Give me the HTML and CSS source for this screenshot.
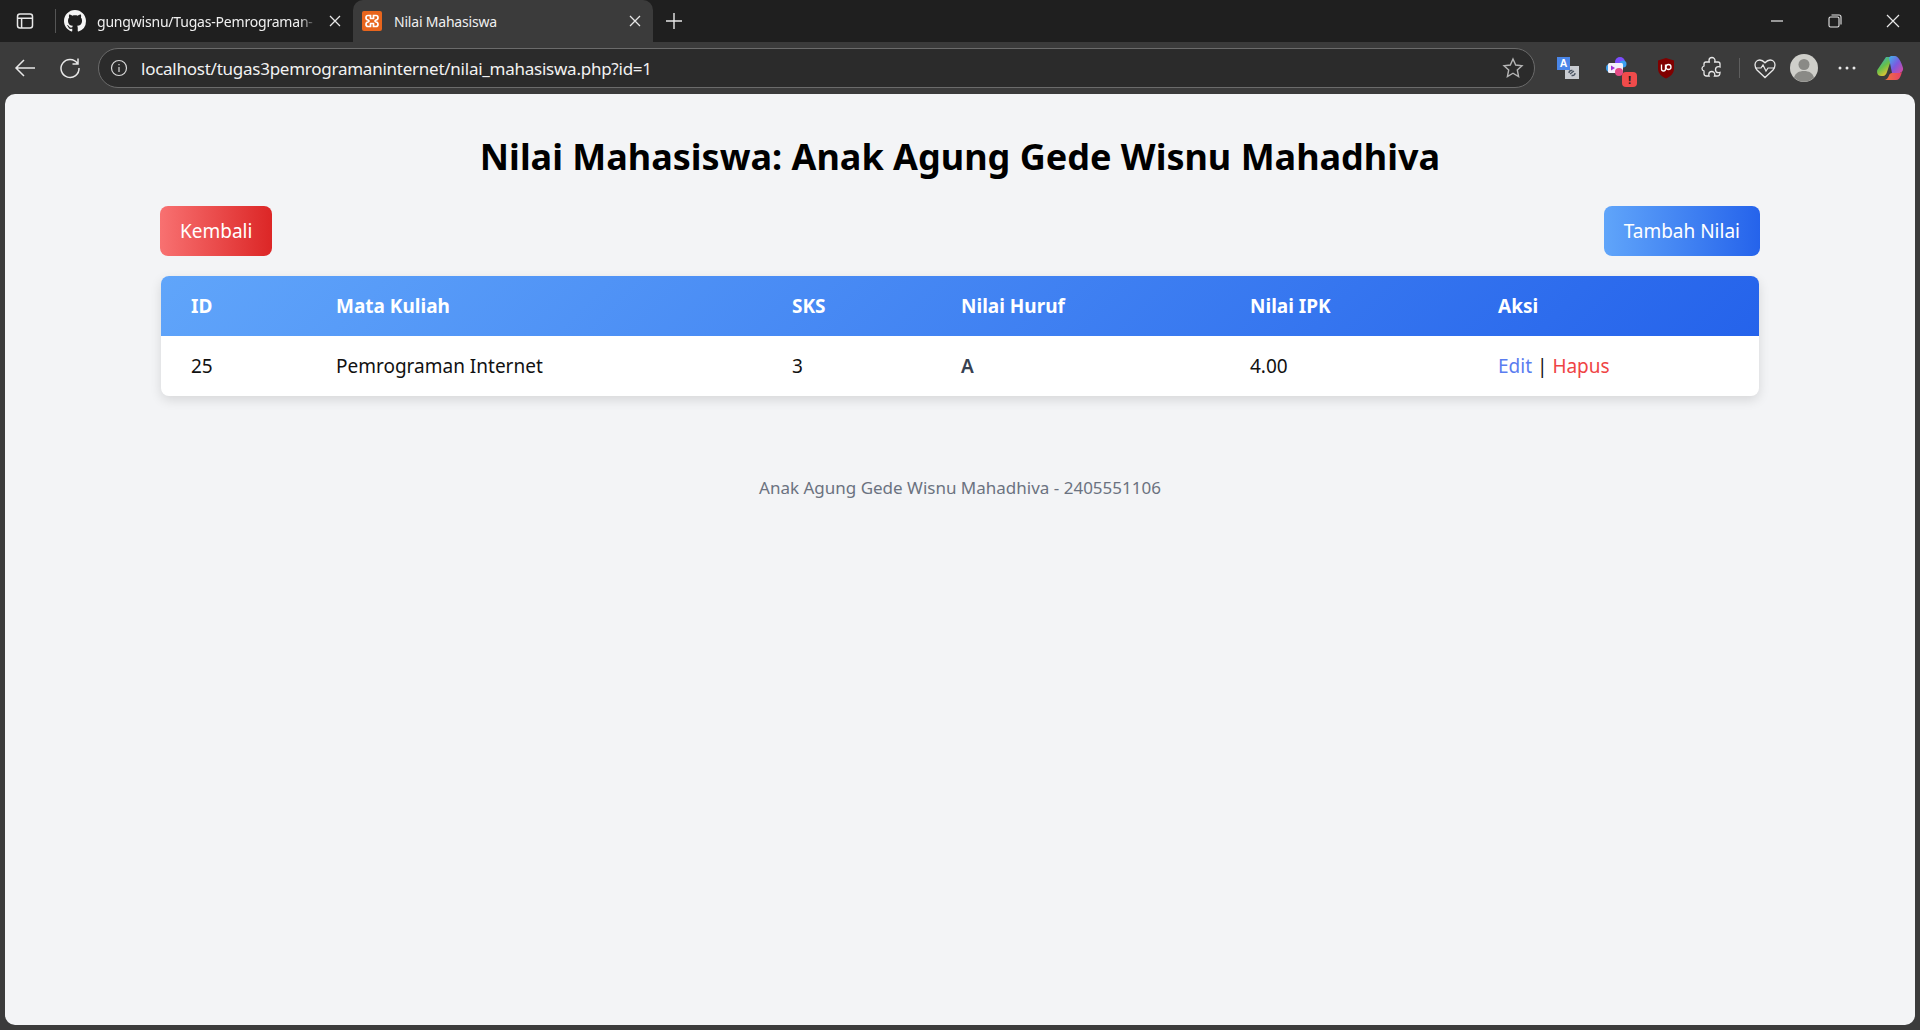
FILE: index.html
```html
<!DOCTYPE html>
<html lang="en">
<head>
    <meta charset="UTF-8">
    <meta name="viewport" content="width=device-width, initial-scale=1.0">
    <title>Nilai Mahasiswa</title>
    <link rel="stylesheet" href="styles.css">
</head>
<body>
    <!-- browser chrome -->
    <div class="tab-strip">
        <svg class="tab-panel-icon" width="20" height="20" viewBox="0 0 20 20" fill="none" stroke="#e8e8e8" stroke-width="1.5"><rect x="2.5" y="3" width="15" height="14" rx="2.5"/><path d="M2.5 7.2h15M6.6 7.2V17"/></svg>
        <div class="tab-sep"></div>
        <div class="tab">
            <svg class="tab-favicon" width="22" height="22" viewBox="0 0 16 16" fill="#f5f5f5"><path d="M8 0C3.58 0 0 3.58 0 8c0 3.54 2.29 6.53 5.47 7.59.4.07.55-.17.55-.38 0-.19-.01-.82-.01-1.49-2.01.37-2.53-.49-2.69-.94-.09-.23-.48-.94-.82-1.13-.28-.15-.68-.52-.01-.53.63-.01 1.08.58 1.23.82.72 1.21 1.87.87 2.33.66.07-.52.28-.87.51-1.07-1.78-.2-3.64-.89-3.64-3.95 0-.87.31-1.59.82-2.15-.08-.2-.36-1.02.08-2.12 0 0 .67-.21 2.2.82.64-.18 1.32-.27 2-.27s1.36.09 2 .27c1.53-1.04 2.2-.82 2.2-.82.44 1.1.16 1.92.08 2.12.51.56.82 1.27.82 2.15 0 3.07-1.87 3.75-3.65 3.95.29.25.54.73.54 1.48 0 1.07-.01 1.93-.01 2.2 0 .21.15.46.55.38A8.01 8.01 0 0 0 16 8c0-4.42-3.58-8-8-8z"/></svg>
            <span class="tab-title tab-title-cut">gungwisnu/Tugas-Pemrograman-</span>
            <svg class="tab-close" width="12" height="12" viewBox="0 0 12 12" stroke="#e8e8e8" stroke-width="1.3"><path d="M1 1l10 10M11 1L1 11"/></svg>
        </div>
        <div class="tab tab-active">
            <svg class="tab-favicon" width="20" height="20" viewBox="0 0 20 20"><rect width="20" height="20" rx="2" fill="#e8651d"/><path d="M6 4.5h2.5v3H11.500v-3H14c1.500 0 2 1.200 2 2.300s-.8 2-2 2.200l-1 1 1 1c1.200.2 2 1.100 2 2.200s-.5 2.300-2 2.300h-2.500v-3H8.500v3H6c-1.500 0-2-1.200-2-2.300s.8-2 2-2.200l1-1-1-1c-1.200-.2-2-1.100-2-2.200s.5-2.300 2-2.300z" fill="none" stroke="#fff" stroke-width="1.700"/></svg>
            <span class="tab-title">Nilai Mahasiswa</span>
            <svg class="tab-close" width="12" height="12" viewBox="0 0 12 12" stroke="#e8e8e8" stroke-width="1.3"><path d="M1 1l10 10M11 1L1 11"/></svg>
        </div>
        <svg class="tab-new" width="18" height="18" viewBox="0 0 18 18" stroke="#e8e8e8" stroke-width="1.4"><path d="M9 1v16M1 9h16"/></svg>
        <div class="window-controls">
            <svg width="14" height="14" viewBox="0 0 14 14" stroke="#e8e8e8" stroke-width="1.2"><path d="M1 7h12"/></svg>
            <svg width="14" height="14" viewBox="0 0 14 14" fill="none" stroke="#e8e8e8" stroke-width="1.100"><rect x="1" y="3" width="10" height="10" rx="1.500"/><path d="M3.500 1h7.500a2 2 0 0 1 2 2v7.500"/></svg>
            <svg width="14" height="14" viewBox="0 0 14 14" stroke="#e8e8e8" stroke-width="1.200"><path d="M1 1l12 12M13 1L1 13"/></svg>
        </div>
    </div>

    <div class="toolbar">
        <svg class="tool-icon" width="24" height="24" viewBox="0 0 24 24" fill="none" stroke="#e8e8e8" stroke-width="1.500"><path d="M22 12H3M11 4l-8 8 8 8"/></svg>
        <svg class="tool-icon" width="24" height="24" viewBox="0 0 24 24" fill="none" stroke="#e8e8e8" stroke-width="1.500"><path d="M19.500 7.500A9 9 0 1 0 21 12M20 2.500v5.500h-5.500"/></svg>
        <div class="address-bar">
            <svg width="18" height="18" viewBox="0 0 18 18" fill="none" stroke="#d8d8d8" stroke-width="1.200"><circle cx="9" cy="9" r="7.500"/><path d="M9 8v5M9 5v1.300"/></svg>
            <span class="url">localhost/tugas3pemrogramaninternet/nilai_mahasiswa.php?id=1</span>
            <svg class="star" width="22" height="22" viewBox="0 0 22 22" fill="none" stroke="#b5b5b5" stroke-width="1.400"><path d="M11 2l2.700 6 6.300.7-4.700 4.300 1.300 6.500L11 16.200l-5.600 3.300 1.300-6.500L2 8.700 8.300 8z"/></svg>
        </div>
        <div class="extensions">
            <svg class="ext ext-translate" width="24" height="24" viewBox="0 0 24 24"><rect x="9" y="10" width="14" height="13" fill="#c9ccd1"/><path d="M13 17a2.500 2.500 0 0 1 2.500-2.500h1M19 17a2.500 2.500 0 0 1-2.500 2.500h-1M14 18l4-3" stroke="#4b5563" stroke-width="1.300" fill="none"/><rect x="1" y="1" width="13" height="13" fill="#4a86e8"/><text x="7.500" y="11" font-size="10.500" font-weight="700" fill="#fff" text-anchor="middle" font-family="Liberation Sans, sans-serif">A</text></svg>
            <div class="ext ext-badged">
                <svg width="24" height="24" viewBox="0 0 24 24"><circle cx="15" cy="6" r="5" fill="#7c4dff"/><circle cx="18" cy="8" r="3.500" fill="#3aa0f0"/><circle cx="5" cy="12" r="4" fill="#3aa0f0"/><rect x="3" y="7" width="15" height="10" rx="1.500" fill="#f3f0fb"/><path d="M6 9.500l4 2.500-4 2.500z" fill="#a232d8"/><circle cx="14" cy="16" r="4" fill="#e44a86"/></svg>
                <span class="ext-alert">!</span>
            </div>
            <svg class="ext" width="20" height="24" viewBox="0 0 20 24"><path d="M10 2l8 2.500v8c0 5-3.500 8-8 10-4.500-2-8-5-8-10v-8z" fill="#800000"/><path d="M5.500 8.500v4.500a2 2 0 0 0 4 0V8.500" fill="none" stroke="#fff" stroke-width="1.300"/><circle cx="12.500" cy="11" r="2.500" fill="none" stroke="#fff" stroke-width="1.300"/></svg>
            <svg class="ext" width="22" height="24" viewBox="0 0 22 24" fill="none" stroke="#e8e8e8" stroke-width="1.300"><path d="M8 4.500a3 3 0 0 1 6 0c0 .6-.2 1-.3 1.500H17a2 2 0 0 1 2 2v3c-.5-.2-1-.3-1.500-.3a3 3 0 0 0 0 6c.5 0 1-.1 1.500-.3 0 2-1 3.600-3 3.600h-2.500c.2-.4.300-.9.300-1.500a3 3 0 0 0-6 0c0 .6.100 1.100.3 1.500H5.500c-1.500 0-2.500-1-2.500-2.500v-2.500c-1-.3-2-1.200-2-2.500s1-2.200 2-2.500V8a2 2 0 0 1 2-2h3.300C8.200 5.500 8 5.100 8 4.500z"/></svg>
            <div class="tool-sep"></div>
            <svg class="ext" width="22" height="22" viewBox="0 0 22 22" fill="none" stroke="#e8e8e8" stroke-width="1.300"><path d="M3 13C1.500 11 1 9.500 1 8c0-3 2.200-5 4.800-5 2 0 3.600 1 5.200 2.800C12.600 4 14.200 3 16.200 3 18.800 3 21 5 21 8c0 1.500-.5 3-2 5l-8 7.500z"/><path d="M1.500 11H7l2-3 3 6 2-3h6.500" stroke-width="1.200"/></svg>
            <div class="avatar">
                <svg width="28" height="28" viewBox="0 0 28 28"><circle cx="14" cy="14" r="14" fill="#cfcfca"/><circle cx="14" cy="10.500" r="5.500" fill="#8a8a86"/><path d="M4 23.500c1.500-4.500 5-6.500 10-6.500s8.500 2 10 6.500a14 14 0 0 1-20 0z" fill="#8a8a86"/></svg>
            </div>
            <svg class="ext ext-more" width="18" height="4" viewBox="0 0 18 4" fill="#e8e8e8"><circle cx="2" cy="2" r="1.500"/><circle cx="9" cy="2" r="1.500"/><circle cx="16" cy="2" r="1.500"/></svg>
            <svg class="ext ext-copilot" width="28" height="26" viewBox="0 0 28 26" fill="none">
                <defs>
                    <linearGradient id="copilotA" x1="0" y1="0" x2="0.600" y2="1"><stop offset="0" stop-color="#29a8e8"/><stop offset="0.550" stop-color="#66c04a"/><stop offset="1" stop-color="#f2c230"/></linearGradient>
                    <linearGradient id="copilotB" x1="0" y1="0" x2="1" y2="1"><stop offset="0" stop-color="#3fb5e8"/><stop offset="0.500" stop-color="#7a5ae0"/><stop offset="1" stop-color="#e0489a"/></linearGradient>
                    <linearGradient id="copilotC" x1="0" y1="0" x2="1" y2="0"><stop offset="0" stop-color="#ef7a3a"/><stop offset="1" stop-color="#e83e6a"/></linearGradient>
                </defs>
                <path d="M10 2h6l-5 15c-.6 2-2 4-4 4H5c-3 0-4.500-3-3.700-6z" fill="url(#copilotA)"/>
                <path d="M13 3c.6-1.500 1.500-2 3-2h3c3 0 6 5 8 12 .5 2.500-1.500 5-4 5h-7z" fill="url(#copilotB)"/>
                <path d="M8 25h12c2.500 0 4-2 5-5l1-3c-1 1-3 1-5 1h-5c-1.500 0-2.500 1-3 2.500C12 23 10.500 25 8 25z" fill="url(#copilotC)"/>
            </svg>
        </div>
    </div>

    <!-- page -->
    <div class="viewport">
        <main class="content">
            <h1>Nilai Mahasiswa: Anak Agung Gede Wisnu Mahadhiva</h1>
            <div class="actions">
                <a class="btn btn-red" href="#">Kembali</a>
                <a class="btn btn-blue" href="#">Tambah Nilai</a>
            </div>
            <div class="table-wrap">
                <table>
                    <thead>
                        <tr>
                            <th class="col-id">ID</th>
                            <th class="col-mk">Mata Kuliah</th>
                            <th class="col-sks">SKS</th>
                            <th class="col-huruf">Nilai Huruf</th>
                            <th class="col-ipk">Nilai IPK</th>
                            <th>Aksi</th>
                        </tr>
                    </thead>
                    <tbody>
                        <tr>
                            <td>25</td>
                            <td>Pemrograman Internet</td>
                            <td>3</td>
                            <td class="grade">A</td>
                            <td>4.00</td>
                            <td><a class="link-edit" href="#">Edit</a> | <a class="link-hapus" href="#">Hapus</a></td>
                        </tr>
                    </tbody>
                </table>
            </div>
            <footer>Anak Agung Gede Wisnu Mahadhiva - 2405551106</footer>
        </main>
    </div>
</body>
</html>
```
FILE: styles.css
```css
* {
    box-sizing: border-box;
}

html, body {
    height: 100%;
}

body {
    margin: 0;
    display: flex;
    flex-direction: column;
    height: 1030px;
    overflow: hidden;
    background: #3b3b3b;
    font-family: "Noto Sans", "Open Sans", sans-serif;
}

/* browser chrome */
.tab-strip {
    height: 42px;
    flex: none;
    display: flex;
    align-items: center;
    background: #1f1f1f;
    color: #f0f0f0;
    font-size: 14px;
}

.tab-panel-icon {
    margin-left: 15px;
    flex: none;
}

.tab-sep {
    width: 1px;
    height: 24px;
    margin-left: 20px;
    background: #555;
}

.tab {
    display: flex;
    align-items: center;
    height: 42px;
    width: 297px;
    padding: 0 12px 0 8px;
}

.tab-active {
    width: 300px;
    padding-left: 9px;
    background: #3b3b3b;
    border-radius: 10px 10px 0 0;
}

.tab-favicon {
    flex: none;
}

.tab-title {
    flex: 1;
    margin-left: 11px;
    white-space: nowrap;
    overflow: hidden;
    letter-spacing: -0.2px;
}

.tab-active .tab-title {
    margin-left: 12px;
}

.tab-title-cut {
    -webkit-mask-image: linear-gradient(90deg, #000 92%, transparent);
    mask-image: linear-gradient(90deg, #000 92%, transparent);
}

.tab-close {
    flex: none;
    margin-left: 12px;
}

.tab-new {
    margin-left: 12px;
}

.window-controls {
    margin-left: auto;
    display: flex;
    gap: 44px;
    padding-right: 20px;
}

.toolbar {
    height: 52px;
    flex: none;
    display: flex;
    align-items: center;
    padding: 0 10px 0 13px;
    background: #3b3b3b;
}

.tool-icon {
    flex: none;
    margin-right: 21px;
}

.address-bar {
    flex: none;
    width: 1437px;
    height: 40px;
    margin-left: -5px;
    display: flex;
    align-items: center;
    padding: 0 10px 0 11px;
    background: #2b2b2b;
    border: 1px solid #6b6b6b;
    border-radius: 20px;
}

.url {
    flex: 1;
    margin-left: 13px;
    color: #f2f2f2;
    font-size: 17px;
    letter-spacing: -0.25px;
    white-space: nowrap;
}

.extensions {
    flex: 1;
    display: flex;
    align-items: center;
    padding-left: 21px;
}

.ext {
    flex: none;
}

.ext-badged {
    position: relative;
    width: 24px;
    height: 24px;
    margin-left: 25px;
}

.ext-alert {
    position: absolute;
    right: -8px;
    bottom: -7px;
    width: 15px;
    height: 15px;
    border-radius: 4px;
    background: #f04b4b;
    color: #1f1f1f;
    font-size: 11px;
    font-weight: 700;
    line-height: 15px;
    text-align: center;
}

.ext-badged + .ext {
    margin-left: 27px;
}

.ext-badged + .ext + .ext {
    margin-left: 25px;
}

.tool-sep {
    width: 1px;
    height: 20px;
    margin: 0 14px 0 16px;
    background: #5e5e5e;
}

.avatar {
    width: 28px;
    height: 28px;
    margin-left: 14px;
}

.ext-more {
    margin-left: 20px;
}

.ext-copilot {
    margin-left: 20px;
}

/* page */
.viewport {
    flex: 1;
    margin: 0 5px 5px;
    background: #f3f4f6;
    border-radius: 10px;
    overflow: hidden;
}

.content {
    width: 1600px;
    margin: 0 auto;
    padding-top: 38px;
}

h1 {
    margin: 0 0 24px;
    font-size: 36px;
    line-height: 50px;
    font-weight: 700;
    color: #000;
    text-align: center;
}

.actions {
    display: flex;
    justify-content: space-between;
    margin-bottom: 20px;
}

.btn {
    display: block;
    height: 50px;
    padding: 0 20px;
    border-radius: 8px;
    color: #fff;
    font-size: 19px;
    line-height: 50px;
    text-decoration: none;
}

.btn-red {
    background: linear-gradient(90deg, #f87171, #dc2626);
}

.btn-blue {
    background: linear-gradient(90deg, #60a5fa, #2563eb);
}

.table-wrap {
    margin: 0 1px;
    background: #fff;
    border-radius: 8px;
    overflow: hidden;
    box-shadow: 0 4px 12px rgba(0, 0, 0, 0.12);
}

table {
    width: 100%;
    border-collapse: collapse;
    table-layout: fixed;
}

thead tr {
    background: linear-gradient(135deg, #60a5fa, #2563eb);
}

th, td {
    height: 60px;
    padding: 0 0 0 30px;
    text-align: left;
    font-size: 19px;
}

th {
    color: #fff;
    font-weight: 700;
}

td {
    color: #111;
}

.col-id {
    width: 145px;
}

.col-mk {
    width: 456px;
}

.col-sks {
    width: 169px;
}

.col-huruf {
    width: 289px;
}

.col-ipk {
    width: 248px;
}

.grade {
    font-weight: 600;
    color: #374151;
}

.link-edit {
    color: #5a7df0;
    text-decoration: none;
}

.link-hapus {
    color: #ef4444;
    text-decoration: none;
}

footer {
    margin-top: 80px;
    text-align: center;
    color: #6b7280;
    font-size: 17px;
}
```
